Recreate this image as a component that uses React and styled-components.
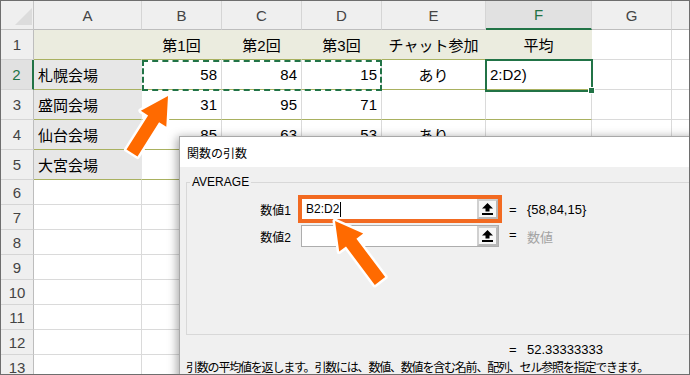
import React from 'react';
import styled, { createGlobalStyle, css } from 'styled-components';

const GlobalStyle = createGlobalStyle`
  html, body { margin: 0; padding: 0; background: #fff; }
  body { font-family: "Liberation Sans", "Noto Sans CJK JP", sans-serif; }
`;

const GREEN = '#217346';
const OLIVE = '#a9b160';
const GRID = '#dadada';

const Frame = styled.div`
  position: relative;
  box-sizing: border-box;
  width: 690px;
  height: 375px;
  border: 1px solid #6e6e6e;
  overflow: hidden;
  background: #fff;
`;

const Sheet = styled.div`
  display: grid;
  grid-template-columns: 33px 108px 80px 80px 80px 104px 106px 80px 80px;
  grid-template-rows: 29px repeat(5, 30px) repeat(8, 25px);
  font-size: 15px;
  color: #000;
`;

const Corner = styled.div`
  grid-row: 1;
  grid-column: 1;
  position: relative;
  box-sizing: border-box;
  background: #efefef;
  border-right: 1px solid #c4c4c4;
  border-bottom: 1px solid #c4c4c4;
  &::after {
    content: '';
    position: absolute;
    right: 1px;
    bottom: 4px;
    width: 17px;
    height: 17px;
    background: #dcdcdc;
    clip-path: polygon(100% 0, 100% 100%, 0 100%);
  }
`;

const ColHead = styled.div`
  grid-row: 1;
  grid-column: ${p => p.$col};
  box-sizing: border-box;
  display: flex;
  align-items: center;
  justify-content: center;
  background: #efefef;
  color: #444;
  border-right: 1px solid #d5d5d5;
  border-bottom: 1px solid #bdbdbd;
  ${p => p.$active && css`
    background: #e1e1e1;
    color: ${GREEN};
    border-bottom: 2px solid ${GREEN};
  `}
`;

const RowHead = styled.div`
  grid-row: ${p => p.$row};
  grid-column: 1;
  box-sizing: border-box;
  display: flex;
  align-items: center;
  justify-content: center;
  background: #efefef;
  color: #444;
  border-right: 1px solid #bdbdbd;
  border-bottom: 1px solid #d5d5d5;
  ${p => p.$active && css`
    background: #e1e1e1;
    color: ${GREEN};
    border-right: 2px solid ${GREEN};
  `}
`;

const kinds = {
  head: { bg: '#ebecdf', right: '#ebecdf', bottom: OLIVE },
  label: { bg: '#e7e7e7', right: '#e7e7e7', bottom: OLIVE },
  body: { bg: '#fff', right: GRID, bottom: OLIVE },
  plain: { bg: '#fff', right: GRID, bottom: GRID },
};

const justify = { left: 'flex-start', center: 'center', right: 'flex-end' };

const Cell = styled.div`
  grid-row: ${p => p.$row};
  grid-column: ${p => p.$col};
  box-sizing: border-box;
  display: flex;
  align-items: center;
  justify-content: ${p => justify[p.$align || 'left']};
  padding: 0 4px;
  white-space: nowrap;
  overflow: hidden;
  background: ${p => kinds[p.$kind].bg};
  border-right: 1px solid ${p => kinds[p.$kind].right};
  border-bottom: 1px solid ${p => kinds[p.$kind].bottom};
`;

const Marquee = styled.div`
  grid-column: 3 / 6;
  grid-row: 3;
  box-sizing: border-box;
  margin-bottom: -1px;
  border: 2px dashed ${GREEN};
  z-index: 1;
  pointer-events: none;
`;

const Selection = styled.div`
  grid-column: 7;
  grid-row: 3;
  position: relative;
  margin: -1px -1px -2px -1px;
  border: 2px solid ${GREEN};
  z-index: 1;
  pointer-events: none;
  &::after {
    content: '';
    position: absolute;
    right: -4px;
    bottom: -4px;
    width: 5px;
    height: 5px;
    background: ${GREEN};
    border: 1px solid #fff;
  }
`;

const Dialog = styled.div`
  position: absolute;
  left: 178px;
  top: 135px;
  width: 560px;
  height: 270px;
  box-sizing: border-box;
  border: 1px solid #a8a8a8;
  box-shadow: -2px 1px 9px rgba(0, 0, 0, 0.35);
  display: flex;
  flex-direction: column;
  font-size: 12px;
  color: #000;
  z-index: 2;
`;

const TitleBar = styled.div`
  height: 30px;
  flex: none;
  display: flex;
  align-items: center;
  padding-left: 7px;
  background: #fff;
`;

const Body = styled.div`
  flex: 1;
  display: flex;
  flex-direction: column;
  background: #f0f0f0;
  padding: 8px 0 0 6px;
`;

const Group = styled.fieldset`
  box-sizing: border-box;
  margin: 0;
  padding: 0;
  width: 600px;
  height: 160px;
  border: 1px solid #d8d8d8;
  min-inline-size: 0;
`;

const Legend = styled.legend`
  margin-left: 3px;
  padding: 0 2px;
  line-height: 14px;
`;

const Args = styled.div`
  display: flex;
  flex-direction: column;
  gap: 5px;
  margin-top: 9px;
`;

const ArgRow = styled.div`
  display: grid;
  grid-template-columns: 104px 198px auto;
  column-gap: 10px;
  align-items: center;
`;

const ArgLabel = styled.span`
  text-align: right;
`;

const Field = styled.div`
  box-sizing: border-box;
  height: 22px;
  display: flex;
  align-items: center;
  background: #fff;
  border: 1px solid #adadad;
  ${p => p.$highlight && css`
    outline: 4px solid #f26a21;
    outline-offset: -1px;
  `}
`;

const FieldText = styled.span`
  flex: 1;
  padding-left: 4px;
  display: flex;
  align-items: center;
`;

const Caret = styled.span`
  display: inline-block;
  width: 1px;
  height: 15px;
  margin-left: 1px;
  background: #000;
`;

const PickButton = styled.span`
  box-sizing: border-box;
  width: 21px;
  height: 100%;
  display: flex;
  align-items: center;
  justify-content: center;
  background: #f7f7f7;
  border: 2px solid #d0d0d0;
  border-right-color: #b8b8b8;
  border-bottom-color: #b8b8b8;
`;

const Value = styled.span`
  display: flex;
  font-size: 13px;
  color: ${p => (p.$muted ? '#a3a3a3' : '#000')};
  &::before {
    content: '=';
    width: 18px;
    color: #000;
  }
`;

const Total = styled.div`
  margin: 7px 0 0 323px;
  line-height: 16px;
`;

const Description = styled.div`
  margin-top: 2px;
  line-height: 16px;
  letter-spacing: -1.2px;
  white-space: nowrap;
`;

const Overlay = styled.svg`
  position: absolute;
  left: -1px;
  top: -1px;
  z-index: 3;
  pointer-events: none;
`;

function arrowPoints([tx, ty], [px, py], s = 6.5, h = 15, l = 27) {
  const dx = px - tx;
  const dy = py - ty;
  const len = Math.hypot(dx, dy);
  const ux = dx / len;
  const uy = dy / len;
  const nx = -uy;
  const ny = ux;
  const bx = px - ux * l;
  const by = py - uy * l;
  return [
    [tx + nx * s, ty + ny * s],
    [bx + nx * s, by + ny * s],
    [bx + nx * h, by + ny * h],
    [px, py],
    [bx - nx * h, by - ny * h],
    [bx - nx * s, by - ny * s],
    [tx - nx * s, ty - ny * s],
  ].map(p => p.map(v => v.toFixed(1)).join(',')).join(' ');
}

const UpIcon = () => (
  <svg width="11" height="12" viewBox="0 0 11 12">
    <polygon points="5.5,0 11,5.5 7.5,5.5 7.5,8.5 3.5,8.5 3.5,5.5 0,5.5" fill="#000" />
    <rect x="0" y="10" width="11" height="2" fill="#000" />
  </svg>
);

const cols = ['A', 'B', 'C', 'D', 'E', 'F', 'G', 'H'];

const rows = [
  [['', 'head'], ['第1回', 'head', 'center'], ['第2回', 'head', 'center'], ['第3回', 'head', 'center'], ['チャット参加', 'head', 'center'], ['平均', 'head', 'center']],
  [['札幌会場', 'label'], ['58', 'body', 'right'], ['84', 'body', 'right'], ['15', 'body', 'right'], ['あり', 'body', 'center'], ['2:D2)', 'body']],
  [['盛岡会場', 'label'], ['31', 'body', 'right'], ['95', 'body', 'right'], ['71', 'body', 'right'], ['', 'body'], ['', 'body']],
  [['仙台会場', 'label'], ['85', 'body', 'right'], ['63', 'body', 'right'], ['53', 'body', 'right'], ['あり', 'body', 'center'], ['', 'body']],
  [['大宮会場', 'label'], ['', 'body'], ['', 'body'], ['', 'body'], ['', 'body'], ['', 'body']],
];

export default function App() {
  const allRows = [];
  for (let r = 0; r < 13; r++) {
    const data = rows[r] || [];
    allRows.push(cols.map((c, i) => data[i] || ['', 'plain']));
  }

  return (
    <>
      <GlobalStyle />
      <Frame>
        <Sheet>
          <Corner />
          {cols.map((c, i) => (
            <ColHead key={c} $col={i + 2} $active={c === 'F'}>{c}</ColHead>
          ))}
          {allRows.map((cells, r) => (
            <React.Fragment key={r}>
              <RowHead $row={r + 2} $active={r === 1}>{r + 1}</RowHead>
              {cells.map(([text, kind, align], i) => (
                <Cell key={i} $row={r + 2} $col={i + 2} $kind={kind} $align={align}>{text}</Cell>
              ))}
            </React.Fragment>
          ))}
          <Marquee />
          <Selection />
        </Sheet>

        <Dialog>
          <TitleBar>関数の引数</TitleBar>
          <Body>
            <Group>
              <Legend>AVERAGE</Legend>
              <Args>
                <ArgRow>
                  <ArgLabel>数値1</ArgLabel>
                  <Field $highlight>
                    <FieldText>B2:D2<Caret /></FieldText>
                    <PickButton><UpIcon /></PickButton>
                  </Field>
                  <Value>{'{58,84,15}'}</Value>
                </ArgRow>
                <ArgRow>
                  <ArgLabel>数値2</ArgLabel>
                  <Field>
                    <FieldText />
                    <PickButton><UpIcon /></PickButton>
                  </Field>
                  <Value $muted>数値</Value>
                </ArgRow>
              </Args>
            </Group>
            <Total><Value>52.33333333</Value></Total>
            <Description>
              引数の平均値を返します。引数には、数値、数値を含む名前、配列、セル参照を指定できます。
            </Description>
          </Body>
        </Dialog>

        <Overlay width="690" height="375">
          <g fill="#ff6a00" stroke="#fff" strokeWidth="5" strokeLinejoin="round" paintOrder="stroke">
            <polygon points={arrowPoints([132, 153], [168, 96])} />
            <polygon points={arrowPoints([380, 281], [335, 221])} />
          </g>
        </Overlay>
      </Frame>
    </>
  );
}
